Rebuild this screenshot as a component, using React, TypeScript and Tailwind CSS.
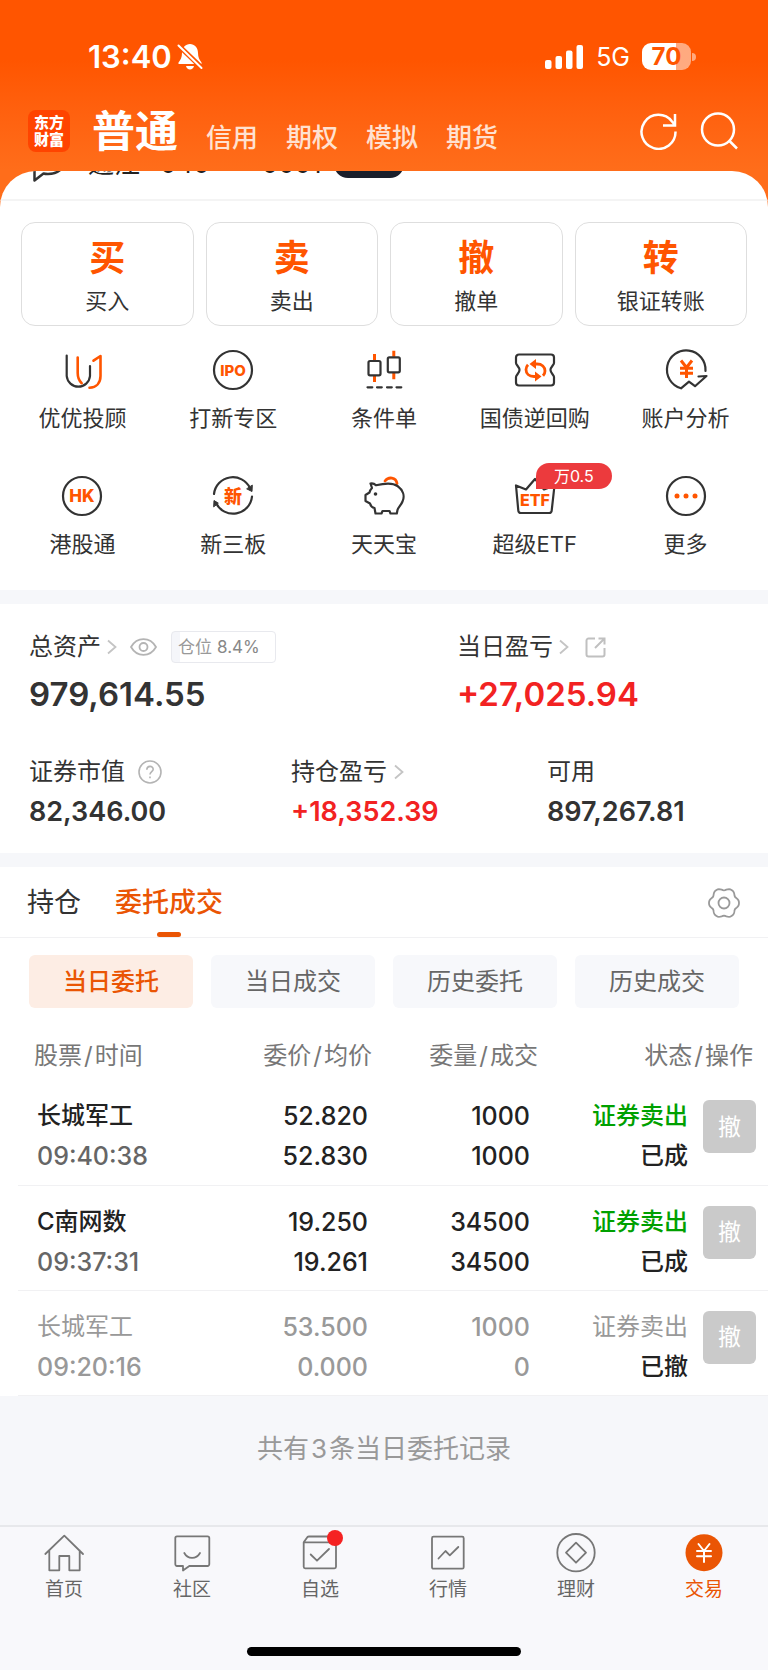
import React from "react";

const ink = "#333333";
const flame = "#ff5500";

type IconProps = { children: React.ReactNode };

function LineIcon({ children }: IconProps) {
  return (
    <svg
      viewBox="0 0 40 40"
      className="h-10 w-10 overflow-visible"
      fill="none"
      stroke={ink}
      strokeWidth="2.2"
      strokeLinecap="round"
      strokeLinejoin="round"
      aria-hidden="true"
    >
      {children}
    </svg>
  );
}

function IconText({ y, size, children }: { y: number; size: number; children: string }) {
  return (
    <text
      x="20"
      y={y}
      fontSize={size}
      textAnchor="middle"
      fill={flame}
      stroke="none"
      className="font-['Inter','Noto_Sans_CJK_SC',sans-serif] font-extrabold"
    >
      {children}
    </text>
  );
}

const services: { label: string; badge?: string; icon: React.ReactNode }[] = [
  {
    label: "优优投顾",
    icon: (
      <LineIcon>
        <path d="M4.700 5.500V26a11.700 11.700 0 0 0 23.300 0V16" />
        <path stroke={flame} strokeWidth="2.600" d="M15.700 7.500V23c0 4 1.200 7.600 4 10.200M31.500 10.700 38.500 6v20c0 7-4.200 11.500-11 11.700" />
      </LineIcon>
    ),
  },
  {
    label: "打新专区",
    icon: (
      <LineIcon>
        <circle cx="20" cy="20" r="19" />
        <IconText y={25.5} size={15}>IPO</IconText>
      </LineIcon>
    ),
  },
  {
    label: "条件单",
    icon: (
      <LineIcon>
        <path stroke={flame} strokeWidth="3" strokeLinecap="butt" d="M10.500 4v6.500M10.500 26v6M29.800 .7v6M29.800 23v6.300" />
        <rect x="4.500" y="11" width="12" height="14.300" rx="1.500" />
        <rect x="23.800" y="7.300" width="12" height="15" rx="1.500" />
        <path d="M3.500 37.300h4.800M13 37.300h4.800M23 37.300h4.800M32.500 37.300h4.800" />
      </LineIcon>
    ),
  },
  {
    label: "国债逆回购",
    icon: (
      <LineIcon>
        <path d="M4 4.500h32a3 3 0 0 1 3 3V13c0 2-3.500 4-3.500 7s3.500 5 3.500 7v5.500a3 3 0 0 1-3 3H4a3 3 0 0 1-3-3V27c0-2 3.500-4 3.500-7S1 15 1 13V7.500a3 3 0 0 1 3-3Z" />
        <path stroke={flame} strokeWidth="2.800" strokeLinecap="butt" d="M18 14h4c5 0 8 3 8 7 0 2-.8 3.500-2 4.800M23 26.500h-4c-5 0-8-3-8-7 0-2 .8-3.500 2-4.800" />
        <path fill={flame} stroke="none" d="m14.500 14 6.500-5v10Zm12 12.500-6.500-5v10Z" />
      </LineIcon>
    ),
  },
  {
    label: "账户分析",
    icon: (
      <LineIcon>
        <path d="M39.500 21A19.300 19.300 0 1 0 15 38.300l8-6.600 6 4.500L40.500 26l-8 .5" />
        <path stroke={flame} strokeWidth="3" strokeLinecap="butt" d="m15 10.500 5.500 7 5.500-7M14 18.300h13M14 23.300h13M20.500 17v11" />
      </LineIcon>
    ),
  },
  {
    label: "港股通",
    icon: (
      <LineIcon>
        <circle cx="20" cy="20" r="19" />
        <IconText y={26} size={17}>HK</IconText>
      </LineIcon>
    ),
  },
  {
    label: "新三板",
    icon: (
      <LineIcon>
        <path d="M1 18a19 19 0 0 1 36-6M39 20.500a19 19 0 0 1-36 6.500" />
        <path fill={ink} strokeWidth="1" d="m39.300 9.500-.3 6-5-2.500ZM.7 30.500l.3-6 4 2.500Z" />
        <IconText y={26.5} size={18}>新</IconText>
      </LineIcon>
    ),
  },
  {
    label: "天天宝",
    icon: (
      <LineIcon>
        <path stroke={flame} strokeWidth="2.800" d="M21 5c3.500-4.500 11-4 12 2.500" />
        <path d="M6.500 7.500c2-.5 4 .3 5.500 1.800 8-2 17-2.500 21.500.7 5.500 4 7.500 10 5 15.500-1.500 4-4.500 6-5 8.500l-.7 3.500h-6.300L25.500 35h-7l-1 2.500h-6L10.500 32c-2.500-.5-4-2.500-4.500-4.500L1.500 25v-6l4-2.500c.5-2 1-3 2.500-4.500Z" />
        <circle cx="11.500" cy="18" r="1.800" fill={ink} stroke="none" />
      </LineIcon>
    ),
  },
  {
    label: "超级ETF",
    badge: "万0.5",
    icon: (
      <LineIcon>
        <path d="m1 9.500 2.300 25A2.500 2.500 0 0 0 6 37h28a2.500 2.500 0 0 0 2.700-2.500L39.500 9.500 29 13.500 20 3l-9 10.500Z" />
        <IconText y={30} size={16}>ETF</IconText>
      </LineIcon>
    ),
  },
  {
    label: "更多",
    icon: (
      <LineIcon>
        <circle cx="20" cy="20" r="19" />
        <g fill={flame} stroke="none">
          <circle cx="11" cy="20" r="2.500" />
          <circle cx="20" cy="20" r="2.500" />
          <circle cx="29" cy="20" r="2.500" />
        </g>
      </LineIcon>
    ),
  },
];

const actions = [
  { mark: "买", label: "买入" },
  { mark: "卖", label: "卖出" },
  { mark: "撤", label: "撤单" },
  { mark: "转", label: "银证转账" },
];

const orders = [
  { name: "长城军工", time: "09:40:38", price: "52.820", avg: "52.830", qty: "1000", done: "1000", side: "证券卖出", state: "已成", faded: false },
  { name: "C南网数", time: "09:37:31", price: "19.250", avg: "19.261", qty: "34500", done: "34500", side: "证券卖出", state: "已成", faded: false },
  { name: "长城军工", time: "09:20:16", price: "53.500", avg: "0.000", qty: "1000", done: "0", side: "证券卖出", state: "已撤", faded: true },
];

function Chevron() {
  return (
    <svg viewBox="0 0 10 16" className="h-4 w-[10px]" fill="none" stroke="#c4c4c4" strokeWidth="1.800" aria-hidden="true">
      <path d="m1 1.500 7.500 6.500L1 14.500" />
    </svg>
  );
}

function StatusBar() {
  return (
    <div className="flex h-[57px] items-center justify-between pr-[72px] pl-[88px]">
      <div className="flex items-center gap-[5px]">
        <span className="text-[31px] leading-9 font-semibold">13:40</span>
        <svg viewBox="0 0 26 28" className="h-7 w-[26px]" aria-hidden="true">
          <path fill="#fff" d="M13 1c4.500 0 8 3.500 8 9 0 4.500 1.500 7 3.500 9.500V21H1.500v-1.500C3.500 17 5 14.500 5 10c0-5.500 3.500-9 8-9ZM9 23h8c-.5 2-2 3.500-4 3.500S9.500 25 9 23Z" />
          <path stroke={flame} strokeWidth="5" d="m1 2 24 23" />
          <path stroke="#fff" strokeWidth="2" strokeLinecap="round" d="m1.500 2.500 23 22.500" />
        </svg>
      </div>
      <div className="flex items-center gap-3">
        <svg viewBox="0 0 39 24" className="h-6 w-[39px]" fill="#fff" aria-hidden="true">
          <rect x="0" y="15" width="6.500" height="9" rx="2" />
          <rect x="10.500" y="11" width="6.500" height="13" rx="2" />
          <rect x="21" y="5.500" width="6.500" height="18.500" rx="2" />
          <rect x="31.500" y="0" width="6.500" height="24" rx="2" />
        </svg>
        <span className="text-[25px] leading-8">5G</span>
        <div className="flex items-center gap-px">
          <div className="flex h-[27px] w-[49px] items-center justify-center rounded-[9px] bg-linear-to-r from-white from-70% to-white/50 to-70% text-2xl leading-none font-bold text-[#ff5500]">
            70
          </div>
          <div className="h-2 w-1 rounded-r-full bg-white/50" />
        </div>
      </div>
    </div>
  );
}

function Header() {
  return (
    <header className="pt-7 text-white">
      <StatusBar />
      <div className="flex h-[86px] items-center justify-between pt-[6px] pr-[30px] pl-7">
        <div className="flex items-center">
          <div className="grid h-[42px] w-[42px] place-items-center rounded-lg bg-[#ff4400] text-center text-[15px] leading-[17px] font-black">
            <span>
              东方
              <br />
              财富
            </span>
          </div>
          <nav className="ml-[22px] flex items-end gap-7 text-[26px] leading-9 font-medium text-[#ffe1d1]">
            <a href="#normal" className="text-[43px] leading-[50px] font-bold text-white">
              普通
            </a>
            <a href="#credit">信用</a>
            <a href="#option">期权</a>
            <a href="#paper">模拟</a>
            <a href="#future">期货</a>
          </nav>
        </div>
        <div className="flex items-center gap-[23px]">
          <button type="button" aria-label="刷新">
            <svg viewBox="0 0 38 38" className="h-[38px] w-[38px]" fill="none" stroke="#fff" strokeWidth="2.500" aria-hidden="true">
              <path d="M36.500 19.500A17 17 0 1 1 33 9.500L36 13M36 2v11.500H24" />
            </svg>
          </button>
          <button type="button" aria-label="搜索">
            <svg viewBox="0 0 38 38" className="h-[38px] w-[38px]" fill="none" stroke="#fff" strokeWidth="2.500" aria-hidden="true">
              <circle cx="18" cy="17.500" r="16" />
              <path d="m29.500 29 7.500 7.500" />
            </svg>
          </button>
        </div>
      </div>
    </header>
  );
}

function AccountStrip() {
  return (
    <div className="h-[30px] overflow-hidden border-b-2 border-[#f4f4f4]">
      <div className="-mt-[25px] flex h-9 items-center pl-[30px] text-[26px] leading-8 text-[#222]">
        <svg viewBox="0 0 36 36" className="h-9 w-9" fill="none" stroke={ink} strokeWidth="2.500" strokeLinejoin="round" aria-hidden="true">
          <path d="M18 2c9 0 16 5.500 16 13s-6 13-16 13c-2 0-3 0-4.500-.5L4.500 34.500V24C2 21.500 2 18 2 15 2 7.500 9 2 18 2Z" />
        </svg>
        <span className="ml-[22px]">通江</span>
        <span className="ml-5">040</span>
        <span>****</span>
        <span>0001</span>
        <span className="ml-3 h-7 w-[70px] rounded-[14px] bg-[#1a1f2b]" />
      </div>
    </div>
  );
}

function Assets() {
  return (
    <section className="bg-white pt-[27px] pb-[25px] pl-[29px] text-2xl leading-8 text-[#333]">
      <div className="grid grid-cols-[428fr_311fr]">
        <div>
          <div className="flex items-center">
            <span>总资产</span>
            <span className="ml-[6px]"><Chevron /></span>
            <button type="button" aria-label="隐藏金额" className="ml-[13px]">
              <svg viewBox="0 0 27 18" className="h-[18px] w-[27px]" fill="none" stroke="#b4b4b4" strokeWidth="1.800" aria-hidden="true">
                <path d="M1 9c6-10.500 19-10.500 25 0-6 10.500-19 10.500-25 0Z" />
                <circle cx="13.500" cy="9" r="4" />
              </svg>
            </button>
            <span className="ml-[14px] flex h-8 w-[105px] items-center gap-[5px] rounded border border-[#e8e9ee] bg-linear-to-r from-[#f5f6fa] from-8% to-white to-8% pl-[6px] text-[17px] text-[#888]">
              <span className="text-[#999]">仓位</span>8.4%
            </span>
          </div>
          <div className="mt-[11px] text-[33px] leading-10 font-semibold">979,614.55</div>
        </div>
        <div>
          <div className="flex items-center">
            <span>当日盈亏</span>
            <span className="ml-[6px]"><Chevron /></span>
            <button type="button" aria-label="分享" className="ml-4">
              <svg viewBox="0 0 21 21" className="h-[21px] w-[21px]" fill="none" stroke="#c0c0c0" strokeWidth="2" aria-hidden="true">
                <path d="M10 1.500H3.500a2 2 0 0 0-2 2v14a2 2 0 0 0 2 2h14a2 2 0 0 0 2-2V11M13.500 1.500h6v6M19 2l-9 9" />
              </svg>
            </button>
          </div>
          <div className="mt-[11px] text-[33px] leading-10 font-semibold text-[#f22222]">+27,025.94</div>
        </div>
      </div>
      <div className="mt-[42px] grid grid-cols-[262fr_256fr_221fr]">
        <div>
          <div className="flex items-center gap-[13px]">
            证券市值
            <svg viewBox="0 0 24 24" className="h-6 w-6" fill="none" stroke="#b4b4b4" strokeWidth="1.600" aria-hidden="true">
              <circle cx="12" cy="12" r="11" />
              <path d="M8.800 9.800c0-4.500 6.400-4.500 6.400-.6 0 2.400-3.200 2.500-3.200 5.300M12 16.500v1.800" />
            </svg>
          </div>
          <div className="mt-2 text-[27px] font-semibold">82,346.00</div>
        </div>
        <div>
          <div className="flex items-center gap-[7px]">
            持仓盈亏
            <Chevron />
          </div>
          <div className="mt-2 text-[27px] font-semibold text-[#f22222]">+18,352.39</div>
        </div>
        <div>
          <div>可用</div>
          <div className="mt-2 text-[27px] font-semibold">897,267.81</div>
        </div>
      </div>
    </section>
  );
}

const gearPath =
  Array.from({ length: 72 }, (_, i) => {
    const a = (i * Math.PI) / 36;
    const r = 14 + 1.2 * Math.cos(6 * a) - 0.2 * Math.cos(12 * a);
    return `${i === 0 ? "M" : "L"}${(16 + r * Math.cos(a)).toFixed(2)} ${(16 + r * Math.sin(a)).toFixed(2)}`;
  }).join("") + "Z";

function SlashPair({ a, b }: { a: string; b: string }) {
  return (
    <>
      {a}
      <span className="mx-0.5">/</span>
      {b}
    </>
  );
}

function Orders() {
  return (
    <section className="bg-white">
      <div className="flex h-[71px] items-start justify-between border-b border-[#f1f1f3] pr-7 pl-[27px]">
        <div className="flex gap-[34px] text-[27px] leading-[72px] text-[#333]">
          <button type="button" className="h-[70px]">持仓</button>
          <button type="button" className="relative h-[70px] font-medium text-[#ea5504]">
            委托成交
            <span className="absolute bottom-0 left-1/2 h-[5px] w-6 -translate-x-1/2 rounded-full bg-[#ea5504]" />
          </button>
        </div>
        <button type="button" aria-label="设置" className="mt-5">
          <svg viewBox="0 0 32 32" className="h-8 w-8" fill="none" stroke="#999" strokeWidth="1.800" aria-hidden="true">
            <path d={gearPath} />
            <circle cx="16" cy="16" r="5.500" />
          </svg>
        </button>
      </div>
      <div className="grid grid-cols-4 gap-[18px] px-[29px] pt-[17px] text-2xl text-[#666]">
        <button type="button" className="h-[53px] rounded-md bg-[#fdede4] font-medium text-[#ea5504]">当日委托</button>
        <button type="button" className="h-[53px] rounded-md bg-[#f7f8fb]">当日成交</button>
        <button type="button" className="h-[53px] rounded-md bg-[#f7f8fb]">历史委托</button>
        <button type="button" className="h-[53px] rounded-md bg-[#f7f8fb]">历史成交</button>
      </div>
      <div className="pl-[18px]">
        <table className="w-full table-fixed text-right text-2xl leading-10">
          <colgroup>
            <col />
            <col className="w-[152px]" />
            <col className="w-[166px]" />
            <col className="w-[150px]" />
            <col className="w-20" />
          </colgroup>
          <thead className="text-[#777]">
            <tr className="h-[72px]">
              <th className="pt-6 pl-4 text-left font-normal"><SlashPair a="股票" b="时间" /></th>
              <th className="pt-6 font-normal"><SlashPair a="委价" b="均价" /></th>
              <th className="pt-6 font-normal"><SlashPair a="委量" b="成交" /></th>
              <th colSpan={2} className="pt-6 pr-[15px] font-normal"><SlashPair a="状态" b="操作" /></th>
            </tr>
          </thead>
          <tbody>
            {orders.map((o) => (
              <tr
                key={o.time}
                className={
                  o.faded
                    ? "h-[105px] border-b border-[#f1f1f3] align-top text-[#999]"
                    : "h-[105px] border-b border-[#f1f1f3] align-top font-medium text-[#222]"
                }
              >
                <td className="pt-4 pl-[19px] text-left">
                  <div>{o.name}</div>
                  <div className={o.faded ? "text-[25px] font-medium" : "text-[25px] text-[#666]"}>{o.time}</div>
                </td>
                <td className="pt-4 pr-1 text-[25px] font-medium">
                  <div>{o.price}</div>
                  <div>{o.avg}</div>
                </td>
                <td className="pt-4 pr-2 text-[25px] font-medium">
                  <div>{o.qty}</div>
                  <div>{o.done}</div>
                </td>
                <td className="pt-4">
                  <div className={o.faded ? "" : "text-[#00a000]"}>{o.side}</div>
                  <div className="font-medium text-[#222]">{o.state}</div>
                </td>
                <td className="pt-5 pr-3">
                  <button type="button" className="ml-auto block h-[53px] w-[53px] rounded-md bg-[#cacaca] text-[23px] font-normal text-white">
                    撤
                  </button>
                </td>
              </tr>
            ))}
          </tbody>
        </table>
      </div>
    </section>
  );
}

function NavIcon({ children }: IconProps) {
  return (
    <svg
      viewBox="0 0 40 40"
      className="h-10 w-10 overflow-visible"
      fill="none"
      stroke="#777"
      strokeWidth="1.800"
      strokeLinejoin="round"
      strokeLinecap="round"
      aria-hidden="true"
    >
      {children}
    </svg>
  );
}

const navItems = [
  {
    label: "首页",
    active: false,
    icon: <NavIcon><path d="M1.300 21 20.300 2.700 39 21M5.300 17.500v19.800h10V23h10v14.300h10.400V17.500" /></NavIcon>,
  },
  {
    label: "社区",
    active: false,
    icon: <NavIcon><path d="M5 3.300h30.500a1.800 1.800 0 0 1 1.800 1.800v26a1.800 1.800 0 0 1-1.800 1.900H17.300L11 37.500V33H5a1.800 1.800 0 0 1-1.700-1.900v-26A1.800 1.800 0 0 1 5 3.300ZM12.300 20c3.500 6.500 12 6.500 15.700 0" /></NavIcon>,
  },
  {
    label: "自选",
    active: false,
    icon: (
      <NavIcon>
        <path d="M3.700 9.300 7.500 4q.5-.5 1.500-.5h21.500q1 0 1.500.5l4 5.300v24.500a1.500 1.500 0 0 1-1.500 1.500H5.200a1.500 1.500 0 0 1-1.500-1.500V9.300ZM3.700 9.300H36M10.700 21.500l6.300 6.200L29 16" />
        <circle cx="35" cy="5" r="8" fill="#f52222" stroke="none" />
      </NavIcon>
    ),
  },
  {
    label: "行情",
    active: false,
    icon: <NavIcon><rect x="4" y="3.700" width="31.700" height="32" rx="1.500" /><path d="m10.500 25.500 7-7.500 4.300 4.300L30.300 14" /></NavIcon>,
  },
  {
    label: "理财",
    active: false,
    icon: <NavIcon><circle cx="20" cy="19.700" r="18.700" /><path d="m20 9.700 10 10-10 10-10-10Z" /></NavIcon>,
  },
  {
    label: "交易",
    active: true,
    icon: <NavIcon><circle cx="20" cy="19.700" r="18.500" fill="#ea5504" stroke="none" /><path stroke="#fff" strokeWidth="2" d="m14.500 11 5.500 7 5.500-7M13 18h14M13 23.300h14M20 18v11" /></NavIcon>,
  },
];

export default function App() {
  return (
    <div className="bg-[#f6f7fa] font-['Inter','Noto_Sans_CJK_SC',sans-serif]">
      <div className="bg-linear-to-b from-[#ff5500] from-[60px] to-[#ff6d1a] to-[170px]">
        <Header />
        <section className="overflow-hidden rounded-t-[36px] bg-white">
          <AccountStrip />
          <div className="grid grid-cols-4 gap-3 px-[21px] pt-[21px]">
            {actions.map((a) => (
              <button
                key={a.label}
                type="button"
                className="flex h-[104px] flex-col items-center rounded-[14px] border border-[#dedede] pt-[15px] text-[#333]"
              >
                <span className="text-4xl leading-10 font-bold text-[#ff5500]">{a.mark}</span>
                <span className="mt-[7px] text-[22px] leading-8">{a.label}</span>
              </button>
            ))}
          </div>
          <div className="grid grid-cols-5 gap-y-[42px] px-[7px] pt-6 pb-[30px]">
            {services.map((s) => (
              <button key={s.label} type="button" className="flex flex-col items-center text-[22px] leading-8 text-[#333]">
                <span className="relative">
                  {s.icon}
                  {s.badge && (
                    <span className="absolute -top-[13px] left-[21px] flex h-[26px] w-[76px] items-center justify-center rounded-[13px] rounded-bl-none bg-[#ec3a3d] text-base text-white">
                      {s.badge}
                    </span>
                  )}
                </span>
                <span className="mt-3">{s.label}</span>
              </button>
            ))}
          </div>
        </section>
      </div>
      <div className="h-[14px]" />
      <Assets />
      <div className="h-[14px]" />
      <Orders />
      <p className="flex h-[129px] items-center justify-center pb-6 text-[26px] text-[#999]">
        共有<span className="mx-0.5">3</span>条当日委托记录
      </p>
      <footer className="border-t-2 border-[#e7e8eb] bg-[#f8f8fb] pt-[6px] pb-[14px]">
        <nav className="grid grid-cols-6">
          {navItems.map((n) => (
            <a
              key={n.label}
              href="#nav"
              className={
                n.active
                  ? "flex flex-col items-center gap-[3px] text-[19px] leading-7 text-[#ea5504]"
                  : "flex flex-col items-center gap-[3px] text-[19px] leading-7 text-[#666]"
              }
            >
              {n.icon}
              {n.label}
            </a>
          ))}
        </nav>
        <div className="mx-auto mt-[43px] h-[9px] w-[274px] rounded-full bg-black" />
      </footer>
    </div>
  );
}
